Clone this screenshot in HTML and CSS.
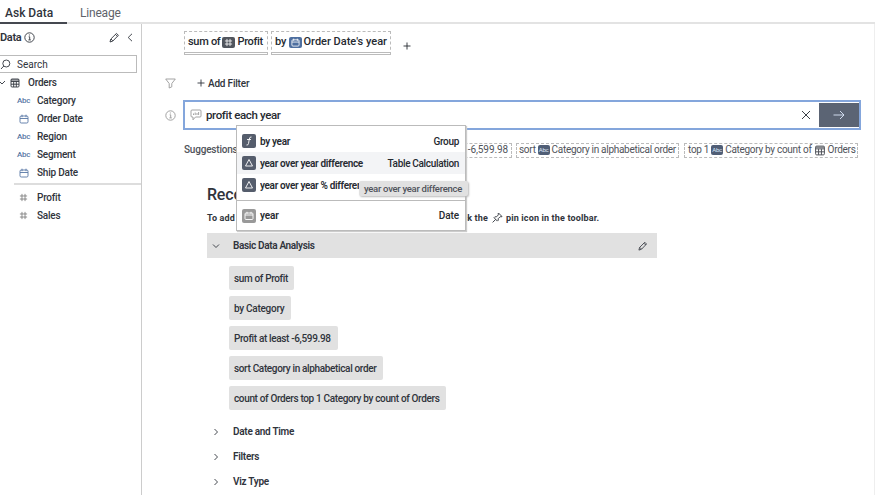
FILE: index.html
```html
<!DOCTYPE html>
<html lang="en">
<head>
<meta charset="utf-8">
<title>Ask Data</title>
<link rel="stylesheet" href="styles.css">
</head>
<body>
<svg class="defs" width="0" height="0">
  <symbol id="info" viewBox="0 0 11 11"><circle cx="5.5" cy="5.5" r="4.7"/><path d="M4.7 4.8h1v3M4.4 7.900h2.400M5.400 2.500v1"/></symbol>
  <symbol id="pencil" viewBox="0 0 11 11"><path d="M1 10l.8-3L7.500 1.400l1.900 1.900L3.800 9.100zM2 7l1.800 1.900M6.500 2.400l2 2"/></symbol>
  <symbol id="cal" viewBox="0 0 10 10"><rect x="1" y="2" width="8" height="7" rx="1.200"/><path d="M1 4.500h8M3 .7v2.500M7 .7v2.500"/></symbol>
  <symbol id="table" viewBox="0 0 10 10"><rect x="1" y="1" width="8" height="8" rx="1"/><path d="M1 2h8M1 3.500h8M3.700 3.500v5.500M6.300 3.500v5.500M1 6.200h8"/></symbol>
  <symbol id="hash" viewBox="0 0 10 10"><path d="M3.300 1v8M6.700 1v8M1 3.300h8M1 6.700h8"/></symbol>
  <symbol id="right" viewBox="0 0 8 8"><path d="M2.500 1l3 3-3 3"/></symbol>
  <symbol id="plus" viewBox="0 0 8 8"><path d="M4 .5v7M.5 4h7"/></symbol>
</svg>
<nav class="tabs"><div class="tab active">Ask Data</div><div class="tab lineage">Lineage</div></nav>
<div class="shell">
  <aside class="side">
    <div class="data-head"><b>Data</b><svg class="ic i11"><use href="#info"/></svg><svg class="ic i11 edit"><use href="#pencil"/></svg><svg class="ic back" viewBox="0 0 6 9"><path d="M5 .8L1.200 4.500 5 8.200"/></svg></div>
    <div class="search"><svg class="ic i11" viewBox="0 0 11 11"><circle cx="6.300" cy="4.500" r="3.500"/><path d="M3.800 7L1 10"/></svg><span>Search</span></div>
    <div class="field root"><svg class="ic chev" viewBox="0 0 6 6"><path d="M0 2l2 2 3-3"/></svg><svg class="ic i10"><use href="#table"/></svg><span>Orders</span></div>
    <div class="field"><i>Abc</i><span>Category</span></div>
    <div class="field"><i><svg class="ic i10 blue"><use href="#cal"/></svg></i><span>Order Date</span></div>
    <div class="field"><i>Abc</i><span>Region</span></div>
    <div class="field"><i>Abc</i><span>Segment</span></div>
    <div class="field"><i><svg class="ic i10 blue"><use href="#cal"/></svg></i><span>Ship Date</span></div>
    <div class="rule"></div>
    <div class="field"><i><svg class="ic i9 gray"><use href="#hash"/></svg></i><span>Profit</span></div>
    <div class="field"><i><svg class="ic i9 gray"><use href="#hash"/></svg></i><span>Sales</span></div>
  </aside>
  <main class="main">
    <div class="query">
      <div class="pill p1"><span class="tight">sum of</span><svg class="badge dark" viewBox="0 0 10 10"><use href="#hash"/></svg><span class="tight">Profit</span></div>
      <div class="pill p2"><span>by</span><svg class="badge blue-bg" viewBox="0 0 10 10"><use href="#cal"/></svg><span>Order Date's year</span></div>
      <svg class="ic i8 add"><use href="#plus"/></svg>
    </div>
    <div class="filter"><svg class="ic i11 pale" viewBox="0 0 11 11"><path d="M.7 1h9.600L6.800 5.500v3.300L4.200 10V5.500z"/></svg><svg class="ic i8 fplus"><use href="#plus"/></svg><span>Add Filter</span></div>
    <div class="ask">
      <svg class="ic i11 pale"><use href="#info"/></svg>
      <div class="input"><svg class="ic bubble" viewBox="0 0 12 12"><path d="M2 1h8q1 0 1 1v5q0 1-1 1H5.500L3 10.800V8H2Q1 8 1 7V2Q1 1 2 1zM3.500 6V4.500M5.200 6V3.500M7 6V4M8.600 6V3"/></svg><span>profit each year</span><svg class="ic clear" viewBox="0 0 10 10"><path d="M1 1l8 8M9 1L1 9"/></svg><div class="go"><svg viewBox="0 0 12 10"><path d="M.5 5h10.500M7 1l4 4-4 4"/></svg></div></div>
      <div class="menu">
        <div class="opt"><svg class="sq" viewBox="0 0 14 14"><path d="M9.500 3Q7.700 2.500 7.300 5L6.500 9.500Q6 11.500 4.500 11M5 5.500h4"/></svg><b>by year</b><span>Group</span></div>
        <div class="opt on"><svg class="sq" viewBox="0 0 14 14"><path d="M7 3.500L10.500 10h-7z"/></svg><b>year over year difference</b><span>Table Calculation</span></div>
        <div class="opt"><svg class="sq" viewBox="0 0 14 14"><path d="M7 3.500L10.500 10h-7z"/></svg><b class="cut">year over year % difference</b></div>
        <div class="opt last"><svg class="sq lt" viewBox="0 0 14 14"><rect x="3" y="4" width="8" height="6.500" rx="1"/><path d="M3 6h8M5 2.800v2M9 2.800v2"/></svg><b>year</b><span>Date</span></div>
        <div class="tip">year over year difference</div>
      </div>
    </div>
    <div class="suggest"><span class="label">Suggestions</span><div class="sp s1">-6,599.98</div><div class="sp s2"><span>sort</span><em>Abc</em><span>Category in alphabetical order</span></div><div class="sp s3"><span>top 1</span><em>Abc</em><span>Category by count of</span><svg class="ic tb" viewBox="0 0 10 10"><use href="#table"/></svg><span>Orders</span></div></div>
    <section class="rec">
      <h2>Recommended</h2>
      <p><span class="intro">To add a recommendation,</span><span class="end">click the</span><svg class="ic i11" viewBox="0 0 11 11"><path d="M6.500 1l3.500 3.500-1 .4-.8-.2-2 2 .1 1.500-.9.900L2 5.700l.9-.9 1.500.1 2-2-.3-1zM3.800 7.300L.6 10.400"/></svg><span class="pin">pin icon in the toolbar.</span></p>
      <div class="group"><svg class="ic i8" viewBox="0 0 8 8"><path d="M1 2.500l3 3 3-3"/></svg><b>Basic Data Analysis</b><svg class="ic i10 gp"><use href="#pencil"/></svg></div>
      <div class="chips">
        <div class="chip c1">sum of Profit</div><div class="chip c2">by Category</div><div class="chip c3">Profit at least -6,599.98</div><div class="chip c4">sort Category in alphabetical order</div><div class="chip c5">count of Orders top 1 Category by count of Orders</div>
      </div>
      <div class="row"><svg class="ic i8"><use href="#right"/></svg><b>Date and Time</b></div>
      <div class="row"><svg class="ic i8"><use href="#right"/></svg><b>Filters</b></div>
      <div class="row"><svg class="ic i8"><use href="#right"/></svg><b>Viz Type</b></div>
    </section>
  </main>
</div>
</body>
</html>
```
FILE: styles.css
```css
* { box-sizing: border-box; }
body { margin: 0; width: 875px; height: 495px; overflow: hidden; background: #fff; color: #30343c; font: 500 10px/12px Roboto, "Liberation Sans", sans-serif; white-space: nowrap; }
.defs { position: absolute; }
svg { display: block; flex: none; fill: none; stroke: currentColor; stroke-width: .9; }
b { font-weight: 600; }
.i8 { width: 8px; height: 8px; }
.i9 { width: 9px; height: 9px; }
.i10 { width: 10px; height: 10px; }
.i11 { width: 11px; height: 11px; }
.blue { color: #5877a5; }
.gray { color: #777; }
.pale { color: #999; }
.tabs { display: flex; height: 24px; border-bottom: 2px solid #e3e3e3; font-size: 12px; line-height: 26px; }
.tab { height: 24px; padding-left: 5px; }
.tab.active { width: 67px; border-bottom: 2px solid #454850; }
.lineage { padding-left: 13px; color: #60636a; font-weight: 400; letter-spacing: -.2px; }
.shell { display: flex; height: 471px; }
.side { width: 142px; border-right: 1px solid #ccc; }
.data-head { display: flex; align-items: center; height: 27px; font-size: 11px; }
.data-head b { width: 24px; letter-spacing: -.3px; }
.edit { margin-left: 74px; }
.back { width: 6px; height: 9px; margin-left: 7px; }
.search { display: flex; align-items: center; gap: 6px; width: 137px; height: 18px; margin-top: 4px; padding-top: 1px; border: 1px solid #bbb; border-left: 0; font-weight: 400; }
.field { display: flex; align-items: center; height: 18px; padding-top: 1px; letter-spacing: -.22px; }
.field i { display: flex; justify-content: center; width: 13px; margin: 0 7px 0 17px; color: #5877a5; font: 500 8px/12px Roboto, sans-serif; letter-spacing: -.3px; }
.root { padding-top: 2px; }
.root .chev { width: 6px; height: 6px; margin-right: 4px; }
.root span { margin-left: 8px; }
.rule { height: 2px; margin: 2px 0 3px 14px; background: #ddd; }
.main { flex: 1; min-width: 0; padding: 7px 0 0 23px; border-right: 1px solid #eee; }
.query { display: flex; height: 24px; padding-left: 19px; font-size: 11px; color: #262a31; }
.pill { display: flex; align-items: center; gap: 2px; height: 24px; padding: 0 3px; border: 1px dashed #bbb; border-bottom: 3px double #bbb; }
.tight { letter-spacing: -.3px; }
.p1 { width: 84px; margin-right: 3px; }
.p2 { width: 120px; }
.badge { width: 13px; height: 11px; padding: 1px; border-radius: 2px; color: #fff; }
.dark { background: #51555d; }
.blue-bg { background: #4e6fa0; }
.add { margin: 11px 0 0 12px; }
.filter { display: flex; align-items: center; height: 20px; margin-top: 18px; letter-spacing: -.2px; }
.filter span { padding-top: 1px; }
.fplus { margin: 0 3px 0 21px; }
.ask { position: relative; display: flex; align-items: center; height: 30px; margin-top: 7px; }
.input { display: flex; align-items: center; width: 678px; height: 30px; margin-left: 7px; padding-left: 5px; border: 2px solid #84a6dc; font-size: 11.5px; letter-spacing: -.35px; color: #262a31; }
.bubble { width: 12px; height: 12px; margin-right: 4px; color: #999; }
.clear { width: 10px; height: 10px; margin-left: auto; }
.go { display: flex; align-items: center; justify-content: center; width: 40px; height: 24px; margin: 0 0 0 8px; background: #5b6474; color: #dce8fa; }
.go svg { width: 12px; height: 10px; }
.menu { position: absolute; left: 71px; top: 25px; z-index: 2; width: 230px; height: 106px; padding-top: 4px; background: #fff; border: 1px solid #bbb; box-shadow: 1px 1px 1px #ccc; color: #262a31; }
.opt { display: flex; align-items: center; height: 22px; padding: 0 6px 0 5px; letter-spacing: -.33px; }
.opt b { padding-top: 1px; }
.opt > span { margin-left: auto; padding-top: 1px; }
.opt .cut { width: 100px; overflow: hidden; }
.on { background: #f3f4f6; }
.last { height: 32px; border-top: 1px solid #bbb; margin-top: 4px; padding-bottom: 2px; }
.last b, .last span { letter-spacing: -.1px; }
.sq { width: 14px; height: 14px; margin-right: 4px; border-radius: 2px; background: #555d6c; color: #fff; }
.lt { background: #999; }
.tip { position: absolute; left: 122px; top: 55px; width: 109px; height: 15px; padding-left: 5px; font-size: 9.5px; letter-spacing: -.28px; line-height: 15px; border-radius: 2px; background: #e1e1e1; color: #50535b; box-shadow: 1px 1px 2px #bbb; }
.suggest { display: flex; align-items: center; height: 16px; margin: 12px 0 0 19px; color: #50535a; font-weight: 400; letter-spacing: -.29px; }
.label { width: 52px; font-weight: 500; letter-spacing: -.2px; }
.sp { display: flex; align-items: center; gap: 2px; height: 15px; border: 1px dashed #bbb; padding: 0 3px; }
.s1 { width: 92px; justify-content: flex-end; margin: 0 4px 0 184px; letter-spacing: -.1px; }
.s2 { width: 163px; margin-right: 5px; padding-left: 2px; }
.s3 { width: 174px; }
.sp em { flex: none; width: 12px; height: 10px; background: #505e76; border-radius: 2px; color: #dce8fa; font: 6px/10px Roboto, sans-serif; letter-spacing: -.2px; text-align: center; }
.tb { width: 12px; height: 11px; }
.rec { padding: 27px 0 0 42px; }
h2 { height: 20px; margin: 0; font-size: 16px; line-height: 20px; font-weight: 500; letter-spacing: -.2px; }
p { display: flex; align-items: center; height: 13px; margin: 6px 0 9px; font-size: 9px; font-weight: 700; letter-spacing: .15px; }
.intro { width: 243px; }
.end { width: 38px; margin-right: 4px; text-align: right; }
.pin { margin-left: 3px; }
.group { display: flex; align-items: center; width: 450px; height: 25px; padding-left: 5px; background: #e1e1e1; }
.group b, .row b { margin-left: 13px; letter-spacing: -.35px; }
.row b { letter-spacing: -.28px; }
.gp { margin-left: auto; margin-right: 9px; }
.chips { padding: 8px 0 3px 22px; }
.chip { height: 24px; margin-bottom: 6px; padding-left: 5px; letter-spacing: -.35px; line-height: 25px; border-radius: 2px; background: #e1e1e1; }
.c1 { width: 65px; }
.c2 { width: 62px; letter-spacing: -.28px; }
.c3 { width: 109px; }
.c4 { width: 154px; }
.c5 { width: 217px; }
.row { display: flex; align-items: center; height: 25px; padding-left: 5px; }
```
